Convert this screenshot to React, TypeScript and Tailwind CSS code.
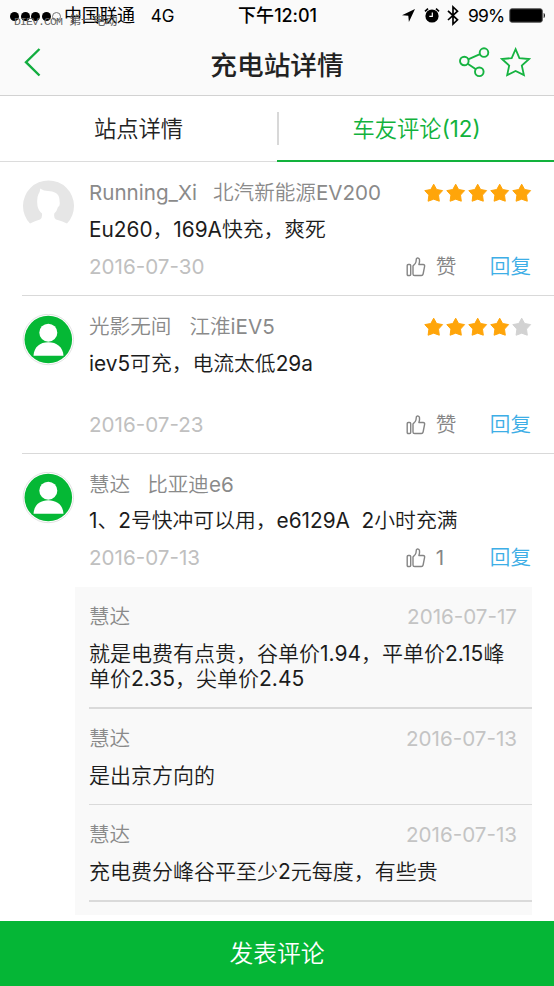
import clsx from "clsx";

type Reply = { name: string; date: string; lines: string[] };

type Review = {
  name: string;
  car: string;
  carGap: string;
  text: string;
  date: string;
  likes: string;
  rating?: number;
  avatar: "default" | "user";
  tall?: boolean;
};

const reviews: Review[] = [
  {
    name: "Running_Xi",
    car: "北汽新能源EV200",
    carGap: "ml-[16px]",
    text: "Eu260，169A快充，爽死",
    date: "2016-07-30",
    likes: "赞",
    rating: 5,
    avatar: "default",
  },
  {
    name: "光影无间",
    car: "江淮iEV5",
    carGap: "ml-[18px]",
    text: "iev5可充，电流太低29a",
    date: "2016-07-23",
    likes: "赞",
    rating: 4,
    avatar: "user",
    tall: true,
  },
  {
    name: "慧达",
    car: "比亚迪e6",
    carGap: "ml-[17px]",
    text: "1、2号快冲可以用，e6129A  2小时充满",
    date: "2016-07-13",
    likes: "1",
    avatar: "user",
  },
];

const replies: Reply[] = [
  {
    name: "慧达",
    date: "2016-07-17",
    lines: ["就是电费有点贵，谷单价1.94，平单价2.15峰", "单价2.35，尖单价2.45"],
  },
  { name: "慧达", date: "2016-07-13", lines: ["是出京方向的"] },
  {
    name: "慧达",
    date: "2016-07-13",
    lines: ["充电费分峰谷平至少2元每度，有些贵"],
  },
];

function StatusBar() {
  return (
    <div className="relative flex h-8 items-center font-[Inter,'Noto_Sans_CJK_SC',sans-serif] text-[18px] leading-8 text-black">
      <div className="ml-[10px] flex gap-[1.5px]">
        {[0, 1, 2, 3].map((i) => (
          <span key={i} className="size-[9px] rounded-full bg-black" />
        ))}
        <span className="size-[9px] rounded-full border border-[#777]" />
      </div>
      <span className="ml-[3px] tracking-[-0.3px]">中国联通</span>
      <span className="ml-[16px] text-[17px]">4G</span>
      <span className="absolute left-[238px] text-[18px] font-medium tracking-[0.1px]">
        下午<span className="tracking-[-0.1px]">12:01</span>
      </span>
      <svg className="absolute left-[402px] top-[8px]" width="14" height="15" viewBox="0 0 14 15">
        <path d="M13 1L0 7.3l6.3.5.6 6.2z" fill="#000" />
      </svg>
      <svg className="absolute left-[424px] top-[7px]" width="16" height="17" viewBox="0 0 16 17">
        <circle cx="8" cy="9" r="6.6" fill="#000" />
        <path d="M1 4.300L4 1.700M15 4.300l-3-2.600" stroke="#000" strokeWidth="1.700" />
        <path d="M8.300 5.500v3.800H5.300" fill="none" stroke="#fff" strokeWidth="1.200" />
      </svg>
      <svg className="absolute left-[447px] top-[5px]" width="12" height="21" viewBox="0 0 12 21">
        <path
          d="M1 5.800l9.500 9L6 19V2l4.500 4.200L1 15"
          fill="none"
          stroke="#000"
          strokeWidth="1.700"
        />
      </svg>
      <span className="absolute left-[468px] text-[17.5px] tracking-[-0.8px]">99%</span>
      <svg className="absolute left-[509px] top-[8px]" width="38" height="15" viewBox="0 0 38 15">
        <rect x=".8" y=".8" width="32.5" height="13.400" rx="2" fill="#000" stroke="#555" />
        <path d="M34.700 5v5c1.600-.5 1.600-4.500 0-5z" fill="#000" />
      </svg>
      <span className="absolute left-[14px] top-[14px] whitespace-pre font-['Liberation_Mono','Noto_Sans_CJK_SC',monospace] text-[11.5px] leading-[15px] tracking-[-0.9px] text-[#666]">
        DIEV.COM <span className="ml-px text-[12.5px] tracking-[-0.5px]">第一电动</span>
      </span>
    </div>
  );
}

function NavBar() {
  return (
    <div className="relative flex h-[63px] items-center justify-center">
      <svg className="absolute left-[24px] top-[16px]" width="18" height="29" viewBox="0 0 18 29">
        <path d="M15.5 1L2 14.200l13.500 13.300" fill="none" stroke="#12ad3f" strokeWidth="2.400" />
      </svg>
      <h1 className="font-['Noto_Sans_CJK_SC',sans-serif] text-[26.7px] leading-[60px] font-medium text-[#222]">
        充电站详情
      </h1>
      <svg
        className="absolute left-[459px] top-[15px]"
        width="31"
        height="31"
        viewBox="0 0 31 31"
        fill="none"
        stroke="#16b341"
        strokeWidth="1.9"
      >
        <circle cx="5.300" cy="14" r="4.300" />
        <circle cx="25" cy="5.600" r="4.300" />
        <circle cx="20.300" cy="24.800" r="4.300" />
        <path d="M9.200 12.300l11.800-5.100M8.700 16.700l8.200 5.600" />
      </svg>
      <svg className="absolute left-[500px] top-[15px]" width="31" height="31" viewBox="0 0 31 31">
        <path
          d="M15.600 2.200l3.800 8.900 9.700.9-7.300 6.500 2.100 9.600-8.300-4.200-8.400 4.200 2-9.600L2 12l9.700-.9z"
          fill="none"
          stroke="#16b341"
          strokeWidth="1.8"
        />
      </svg>
    </div>
  );
}

function Avatar({ kind }: { kind: Review["avatar"] }) {
  if (kind === "default") {
    return (
      <svg width="52" height="52" viewBox="0 0 52 52" className="shrink-0">
        <path
          d="M8 43.500A25.500 25.500 0 1 1 45 43.500Q40 41 34 39.500Q31.500 38 32.300 33.500Q35 31 36 27Q38.500 26 37.500 21C38 13 32 11.500 26 11Q22 11 18 8.500Q18.500 11 16.500 14Q14.500 18 15.500 26Q16.500 31 20 33.500Q20.500 38 18 39.500Q13 41 8 43.500z"
          fill="#e6e6e6"
        />
      </svg>
    );
  }
  return (
    <svg width="52" height="52" viewBox="0 0 52 52" className="shrink-0">
      <circle cx="26.300" cy="25.500" r="25.200" fill="#fff" stroke="#e2e2e2" />
      <circle cx="26.300" cy="25.500" r="23.800" fill="#05b835" />
      <circle cx="26.300" cy="18.700" r="9" fill="#fff" />
      <path d="M11.500 41.700C12 33 18 28.300 26.300 28.300S41 33 41.500 41.700z" fill="#fff" />
    </svg>
  );
}

function Stars({ rating }: { rating: number }) {
  return (
    <div className="flex gap-[2px]">
      {[1, 2, 3, 4, 5].map((n) => (
        <svg key={n} width="20" height="20" viewBox="0 0 20 20">
          <path
            d="M9.700 1.200L12.600 6.500L18.600 7.600L14.500 12.100L15.300 18.200L9.700 16.200L4.100 18.200L4.900 12.100L.8 7.600L6.800 6.500z"
            fill={n <= rating ? "#ffa50a" : "#d2d2d2"}
            stroke={n <= rating ? "#ffa50a" : "#d2d2d2"}
            strokeWidth="1"
            strokeLinejoin="round"
          />
        </svg>
      ))}
    </div>
  );
}

function ThumbIcon() {
  return (
    <svg
      width="20"
      height="21"
      viewBox="0 0 20 21"
      fill="none"
      stroke="#858585"
      strokeWidth="1.400"
      strokeLinejoin="round"
    >
      <rect x="1.200" y="7.500" width="3.500" height="11" rx="1" />
      <path d="M7 9l2.300-2.600c.8-1 .9-2.500 1-4.200.1-1.700 2.900-1.500 3.200.4.300 1.900-.1 3.400-.6 4.900h4.200c1.200 0 1.700.8 1.500 1.900l-1.500 7.600c-.2 1-.8 1.500-1.800 1.500H8.700c-1.100 0-1.700-.6-1.700-1.600z" />
    </svg>
  );
}

function ReviewItem({ review }: { review: Review }) {
  return (
    <div className="flex pt-[18px] pr-[22px] pl-[22px]">
      <Avatar kind={review.avatar} />
      <div className="ml-[15px] flex-1">
        <div className="flex h-[26px] items-center justify-between text-[20.6px] leading-[26px] text-[#8a8a8a]">
          <div className="whitespace-nowrap">
            <span>{review.name}</span>
            <span className={review.carGap}>{review.car}</span>
          </div>
          {review.rating && <Stars rating={review.rating} />}
        </div>
        <p
          className={clsx(
            "whitespace-pre text-[20.8px] leading-[25px] text-[#1c1c1c]",
            review.rating ? "mt-[11px]" : "mt-[10px]",
          )}
        >
          {review.text}
        </p>
        <div
          className={clsx(
            "flex h-[26px] items-center pr-px text-[20.6px] leading-[26px]",
            review.tall ? "mt-[36px]" : "mt-[12px]",
          )}
        >
          <span className="flex-1 text-[#c0c0c0]">{review.date}</span>
          <ThumbIcon />
          <span className="ml-[10px] w-[54px] text-[#858585]">{review.likes}</span>
          <span className="text-[#3daee6]">回复</span>
        </div>
      </div>
    </div>
  );
}

function ReplyItem({ reply }: { reply: Reply }) {
  return (
    <div className="ml-[14px] pt-[17px]">
      <div className="flex h-[26px] items-center justify-between pr-[15px] text-[20.6px] leading-[26px]">
        <span className="text-[#8a8a8a]">{reply.name}</span>
        <span className="text-[#c4c4c4]">{reply.date}</span>
      </div>
      <div className="mt-[11px] text-[21px] leading-[25px] text-[#1c1c1c]">
        {reply.lines.map((line) => (
          <p key={line} className="whitespace-nowrap">
            {line}
          </p>
        ))}
      </div>
      <div className="mt-[16px] h-[1.5px] bg-[#dadada]" />
    </div>
  );
}

export default function App() {
  return (
    <div className="flex h-[986px] w-[554px] flex-col overflow-hidden bg-white font-[Inter,'Noto_Sans_CJK_SC_DemiLight','Noto_Sans_CJK_SC',sans-serif]">
      <header className="h-[96px] shrink-0 border-b border-[#d2d2d2] bg-[#fafafa]">
        <StatusBar />
        <NavBar />
      </header>

      <nav className="flex h-[66px] shrink-0 text-[22.3px] leading-[66px]">
        <div className="w-[277px] border-b border-[#dcdcdc] text-center text-[#222]">站点详情</div>
        <div className="flex flex-1 border-b-2 border-[#12b23c] text-[#12b23c]">
          <span className="mt-4 h-[33px] w-[2px] bg-[#d8d8d8]" />
          <span className="flex-1 text-center">车友评论(12)</span>
        </div>
      </nav>

      <main className="flex-1 overflow-hidden">
        {reviews.map((review, i) => (
          <div key={review.date}>
            {i > 0 && <div className="mt-[15px] ml-[22px] h-px bg-[#d9d9d9]" />}
            <ReviewItem review={review} />
          </div>
        ))}
        <div className="mt-[16px] mr-[22px] ml-[75px] h-[328px] bg-[#f9f9f9]">
          {replies.map((reply, i) => (
            <ReplyItem key={i} reply={reply} />
          ))}
        </div>
      </main>

      <footer className="h-[65px] shrink-0 bg-[#05b636] text-center text-[23.8px] leading-[65px] text-white">
        发表评论
      </footer>
    </div>
  );
}
